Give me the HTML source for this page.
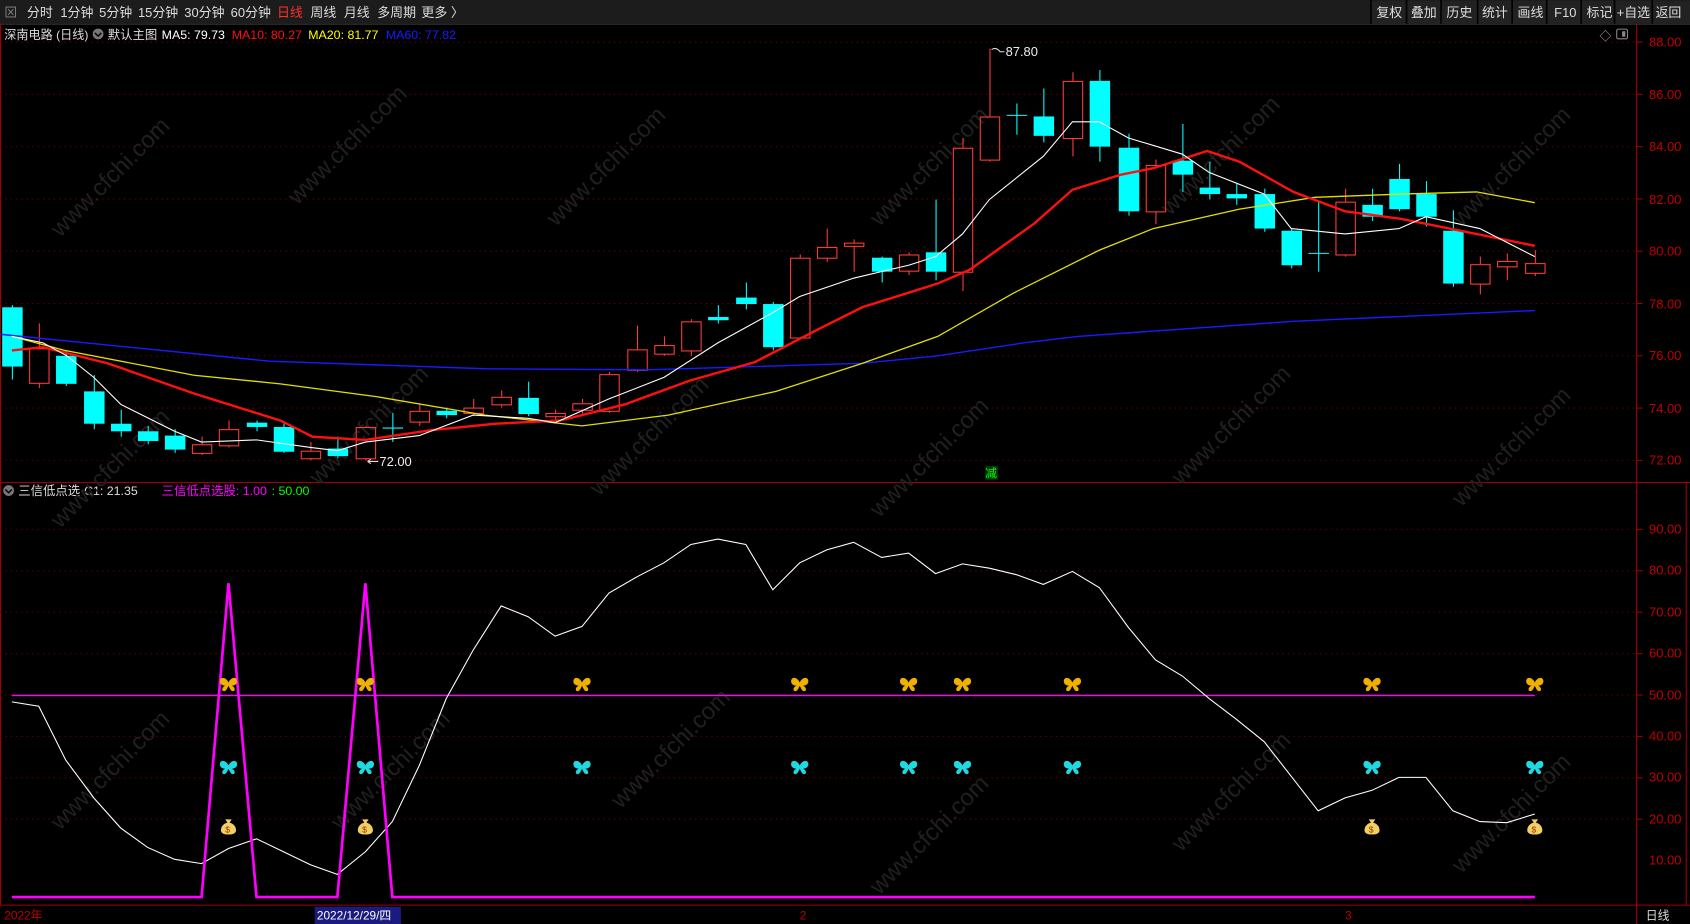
<!DOCTYPE html>
<html><head><meta charset="utf-8"><style>
html,body{margin:0;padding:0;background:#000;width:1690px;height:924px;overflow:hidden}
svg{display:block}
text{font-family:"Liberation Sans","Noto Sans CJK SC",sans-serif}
</style></head><body>
<svg id="s" width="1690" height="924" viewBox="0 0 1568 857" preserveAspectRatio="none" xmlns="http://www.w3.org/2000/svg">
<rect width="1568" height="857" fill="#000"/>
<rect x="0" y="0" width="1568" height="22" fill="#1c1c1c"/>
<line x1="0" y1="22.5" x2="1568" y2="22.5" stroke="#333"/>
<g font-size="12" fill="#ddd">
<text x="4" y="16" fill="#888">⊠</text>
<text x="25" y="16">分时</text><text x="56" y="16">1分钟</text><text x="92" y="16">5分钟</text>
<text x="128" y="16">15分钟</text><text x="171" y="16">30分钟</text><text x="214" y="16">60分钟</text>
<text x="257" y="16" fill="#ff3030">日线</text><text x="288" y="16">周线</text><text x="319" y="16">月线</text>
<text x="350" y="16">多周期</text><text x="391" y="16">更多 〉</text>
</g>
<g font-size="12" fill="#ddd">
<rect x="1272" y="1" width="296" height="21" fill="#222"/>
<g stroke="#000" stroke-width="1.5"><line x1="1272" y1="0" x2="1272" y2="22"/><line x1="1305" y1="0" x2="1305" y2="22"/><line x1="1337" y1="0" x2="1337" y2="22"/><line x1="1371" y1="0" x2="1371" y2="22"/><line x1="1403" y1="0" x2="1403" y2="22"/><line x1="1435" y1="0" x2="1435" y2="22"/><line x1="1467" y1="0" x2="1467" y2="22"/><line x1="1498" y1="0" x2="1498" y2="22"/><line x1="1533" y1="0" x2="1533" y2="22"/></g>
<text x="1277" y="16">复权</text><text x="1309" y="16">叠加</text><text x="1342" y="16">历史</text>
<text x="1375" y="16">统计</text><text x="1408" y="16">画线</text><text x="1442" y="16">F10</text>
<text x="1472" y="16">标记</text><text x="1500" y="16">+自选</text><text x="1536" y="16">返回</text>
</g>
<g font-size="11.5">
<text x="4" y="36" fill="#ddd" textLength="78" lengthAdjust="spacingAndGlyphs">深南电路 (日线)</text>
<circle cx="91" cy="31.5" r="5" fill="#777"/><path d="M88 30.5l3 3 3-3" stroke="#000" fill="none" stroke-width="1.3"/>
<text x="100" y="36" fill="#ddd">默认主图</text>
<text x="150" y="36" fill="#fff">MA5: 79.73</text>
<text x="215" y="36" fill="#ff1010">MA10: 80.27</text>
<text x="286" y="36" fill="#ffff00">MA20: 81.77</text>
<text x="358" y="36" fill="#1a1aff">MA60: 77.82</text>
<circle cx="8" cy="455" r="5" fill="#777"/><path d="M5 454l3 3 3-3" stroke="#000" fill="none" stroke-width="1.3"/>
<text x="17" y="459" fill="#ddd">三信低点选</text><text x="78" y="459" fill="#ddd">C1: 21.35</text>
<text x="150" y="459" fill="#ff00ff">三信低点选股: 1.00</text>
<text x="252" y="459" fill="#00ff00">: 50.00</text>
</g>
<text x="1484" y="37" font-size="11" fill="#aaa">◇</text>
<rect x="1500" y="27" width="10" height="9" rx="1.5" fill="none" stroke="#888"/><rect x="1505" y="29" width="3" height="5" fill="#888"/>
<g stroke="#a00000" fill="none">
<line x1="1518.5" y1="22" x2="1518.5" y2="857"/>
<line x1="0" y1="447.5" x2="1568" y2="447.5"/>
<line x1="0" y1="839.5" x2="1568" y2="839.5"/>
<line x1="0.5" y1="22" x2="0.5" y2="840"/>
<line x1="1564.5" y1="447" x2="1564.5" y2="840"/>
</g>
<g id="grid"></g>
<g font-size="12" fill="#c00000">
<text x="1530" y="43">88.00</text><text x="1530" y="92">86.00</text><text x="1530" y="140">84.00</text>
<text x="1530" y="189">82.00</text><text x="1530" y="237">80.00</text><text x="1530" y="286">78.00</text>
<text x="1530" y="334">76.00</text><text x="1530" y="383">74.00</text><text x="1530" y="431">72.00</text>
<text x="1530" y="495">90.00</text><text x="1530" y="533">80.00</text><text x="1530" y="572">70.00</text>
<text x="1530" y="610">60.00</text><text x="1530" y="649">50.00</text><text x="1530" y="687">40.00</text>
<text x="1530" y="725">30.00</text><text x="1530" y="764">20.00</text><text x="1530" y="802">10.00</text>
</g>
<g id="wm" font-size="22" fill="#202020"></g>
<g id="chart"></g>
<text x="933" y="52" font-size="12" fill="#eee">87.80</text>
<path d="M920 46 q4 -3 8 2 l4 0" stroke="#ddd" fill="none"/>
<text x="352" y="432" font-size="12" fill="#eee">72.00</text>
<path d="M341 428 h10 M341 428 l3 -2 M341 428 l3 2" stroke="#ddd" fill="none"/>
<rect x="914" y="432" width="12" height="13" fill="#003300"/><text x="914" y="443" font-size="11" fill="#00ff00">减</text>
<text x="4" y="853" font-size="11" fill="#c00000">2022年</text>
<rect x="292" y="841" width="80" height="16" fill="#1a1a80"/>
<text x="294" y="853" font-size="11" fill="#fff">2022/12/29/四</text>
<text x="742" y="853" font-size="11" fill="#c00000">2</text>
<text x="1248" y="853" font-size="11" fill="#c00000">3</text>
<text x="1527" y="853" font-size="11" fill="#ddd">日线</text>
</svg>
<script>
const NS="http://www.w3.org/2000/svg";
function el(p,t,a){const e=document.createElementNS(NS,t);for(const k in a)e.setAttribute(k,a[k]);p.appendChild(e);return e;}
const g=document.getElementById('chart'),grid=document.getElementById('grid'),wm=document.getElementById('wm');
for(let i=0;i<9;i++){const y=39+i*48.5;el(grid,'line',{x1:0,x2:1518,y1:y,y2:y,stroke:'#7a0000','stroke-dasharray':'1 4'});el(grid,'line',{x1:1518,x2:1524,y1:y,y2:y,stroke:'#a00000'});}
for(let i=0;i<8;i++){const y=491+i*38.4;el(grid,'line',{x1:0,x2:1518,y1:y,y2:y,stroke:'#7a0000','stroke-dasharray':'1 4'});el(grid,'line',{x1:1518,x2:1524,y1:y,y2:y,stroke:'#a00000'});}
[[0,150],[220,120],[460,140],[760,140],[1030,130],[1300,140],[0,420],[240,380],[500,390],[760,410],[1040,380],[1300,400],[0,700],[260,700],[520,680],[760,760],[1040,720],[1300,740]].forEach(([x,y])=>{const t=el(wm,'text',{x:x+10,y:y+40,transform:`rotate(-45 ${x+70} ${y})`});t.textContent='www.cfchi.com';});
const C=[[11,285,340,283,352,'c'],[36,323,355,300,360,'r'],[61,330,356,325,358,'c'],[87,363,393,348,398,'c'],[112,393,400,380,405,'c'],[137,400,409,395,412,'c'],[162,404,417,398,420,'c'],[187,412,420,405,422,'r'],[212,398,413,390,415,'r'],[238,392,396,390,400,'c'],[263,396,419,393,420,'c'],[288,418,425,410,427,'r'],[313,416,423,405,425,'c'],[339,396,425,395,427,'r'],[364,397,397,383,410,'x'],[389,381,391,375,395,'r'],[414,381,385,378,388,'c'],[439,378,383,370,386,'r'],[465,368,375,362,378,'r'],[490,369,384,354,386,'c'],[515,383,386,380,390,'r'],[540,374,380,370,385,'r'],[565,347,381,345,383,'r'],[591,324,343,302,345,'r'],[616,320,328,312,330,'r'],[641,298,325,296,330,'r'],[666,294,297,283,300,'c'],[692,276,282,262,287,'c'],[717,282,322,280,325,'c'],[742,239,313,236,315,'r'],[767,229,239,212,243,'r'],[792,225,228,222,252,'r'],[818,239,252,238,262,'c'],[843,236,251,234,255,'r'],[868,234,252,185,260,'c'],[893,137,252,128,270,'r'],[918,108,148,45,150,'r'],[943,107,107,96,125,'x'],[968,108,126,82,132,'c'],[995,75,128,67,145,'r'],[1020,75,136,65,150,'c'],[1047,137,196,124,200,'c'],[1072,153,196,148,208,'r'],[1097,149,162,115,178,'c'],[1122,174,180,150,185,'c'],[1147,180,184,170,190,'c'],[1173,180,212,175,215,'c'],[1198,214,246,212,249,'c'],[1223,235,235,186,252,'x'],[1248,187,236,175,238,'r'],[1273,190,201,175,205,'c'],[1298,166,194,152,196,'c'],[1323,180,201,168,210,'c'],[1348,214,263,195,266,'c'],[1373,245,263,238,273,'r'],[1398,242,247,235,260,'r'],[1424,244,253,232,256,'r']];
C.forEach(([x,t,b,h,l,k])=>{
 if(k=='c'){el(g,'line',{x1:x+.5,x2:x+.5,y1:h,y2:l,stroke:'#00ffff'});el(g,'rect',{x:x-9,y:t,width:19,height:Math.max(b-t,2),fill:'#00ffff'});}
 else if(k=='r'){el(g,'line',{x1:x+.5,x2:x+.5,y1:h,y2:t,stroke:'#ff3a3a'});el(g,'line',{x1:x+.5,x2:x+.5,y1:b,y2:l,stroke:'#ff3a3a'});el(g,'rect',{x:x-8.5,y:t+.5,width:18,height:Math.max(b-t,2),fill:'none',stroke:'#ff3a3a'});}
 else{el(g,'line',{x1:x+.5,x2:x+.5,y1:h,y2:l,stroke:'#00ffff'});el(g,'line',{x1:x-9,x2:x+10,y1:t,y2:t,stroke:'#00ffff'});}
});
function pl(pts,c,w){el(g,'polyline',{points:pts,fill:'none',stroke:c,'stroke-width':w});}
pl('0,310 100,320 250,335 450,342 600,343 800,337 870,330 950,318 1000,312 1200,298 1424,288','#1a1aff',1.3);
pl('11,312 60,325 180,348 260,356 350,368 450,385 540,395 620,385 720,363 800,337 870,312 940,272 980,252 1020,232 1070,212 1150,194 1220,183 1300,180 1370,178 1424,188','#e0e000',1.2);
pl('11,325 40,322 100,337 180,365 260,390 290,405 339,408 400,399 460,393 520,390 580,375 640,353 700,336 760,305 800,285 870,263 900,250 960,207 995,176 1040,162 1070,156 1120,140 1150,150 1200,178 1248,196 1300,203 1350,213 1424,228','#ff1010',2.2);
pl('11,312 40,318 62,330 87,350 112,375 162,400 187,410 238,408 288,415 313,418 339,410 389,404 439,385 490,388 515,392 565,370 616,350 666,318 717,290 742,275 792,258 843,246 868,238 893,217 918,185 968,145 995,113 1020,113 1047,128 1097,143 1122,160 1173,180 1198,212 1248,217 1298,212 1323,201 1373,212 1424,238','#ffffff',1);
el(g,'line',{x1:11,x2:1424,y1:645,y2:645,stroke:'#ff00ff','stroke-width':1.2});
pl('11,651 36,655 61,705 87,740 112,768 137,786 162,797 187,801 212,787 238,778 263,790 288,802 313,811 339,790 364,762 389,710 414,648 439,603 465,562 490,572 515,590 540,581 565,550 591,535 616,522 641,505 666,500 692,505 717,547 742,522 767,510 792,503 818,517 843,513 868,532 893,523 918,527 943,533 968,542 995,530 1020,545 1047,582 1072,612 1097,627 1122,648 1147,667 1173,688 1198,720 1223,752 1248,740 1273,733 1298,721 1323,721 1348,752 1373,762 1398,763 1424,755','#ffffff',1);
pl('11,832 187,832 212,541 238,832 313,832 339,541 364,832 1424,832','#ff00ff',2.5);
function bf(x,y,c){el(g,'path',{d:`M${x} ${y}c-2-5-8-6-8-1 0 3 3 4 5 4-3 1-4 5-1 5 2 0 3-3 4-5 1 2 2 5 4 5 3 0 2-4-1-5 2 0 5-1 5-4 0-5-6-4-8 1z`,fill:c});}
[212,339,540,742,843,893,995,1273,1424].forEach(x=>{bf(x,633,'#f0b000');bf(x,710,'#20d8e0');});
[212,339,1273,1424].forEach(x=>{el(g,'path',{d:`M${x-3} 760h6l-2 3c4 1 6 4 6 7 0 3-3 4-7 4s-7-1-7-4c0-3 2-6 6-7z`,fill:'#f0d060'});const t=el(g,'text',{x:x-3,y:772,'font-size':8,fill:'#a03000'});t.textContent='$';});
</script>
</body></html>
